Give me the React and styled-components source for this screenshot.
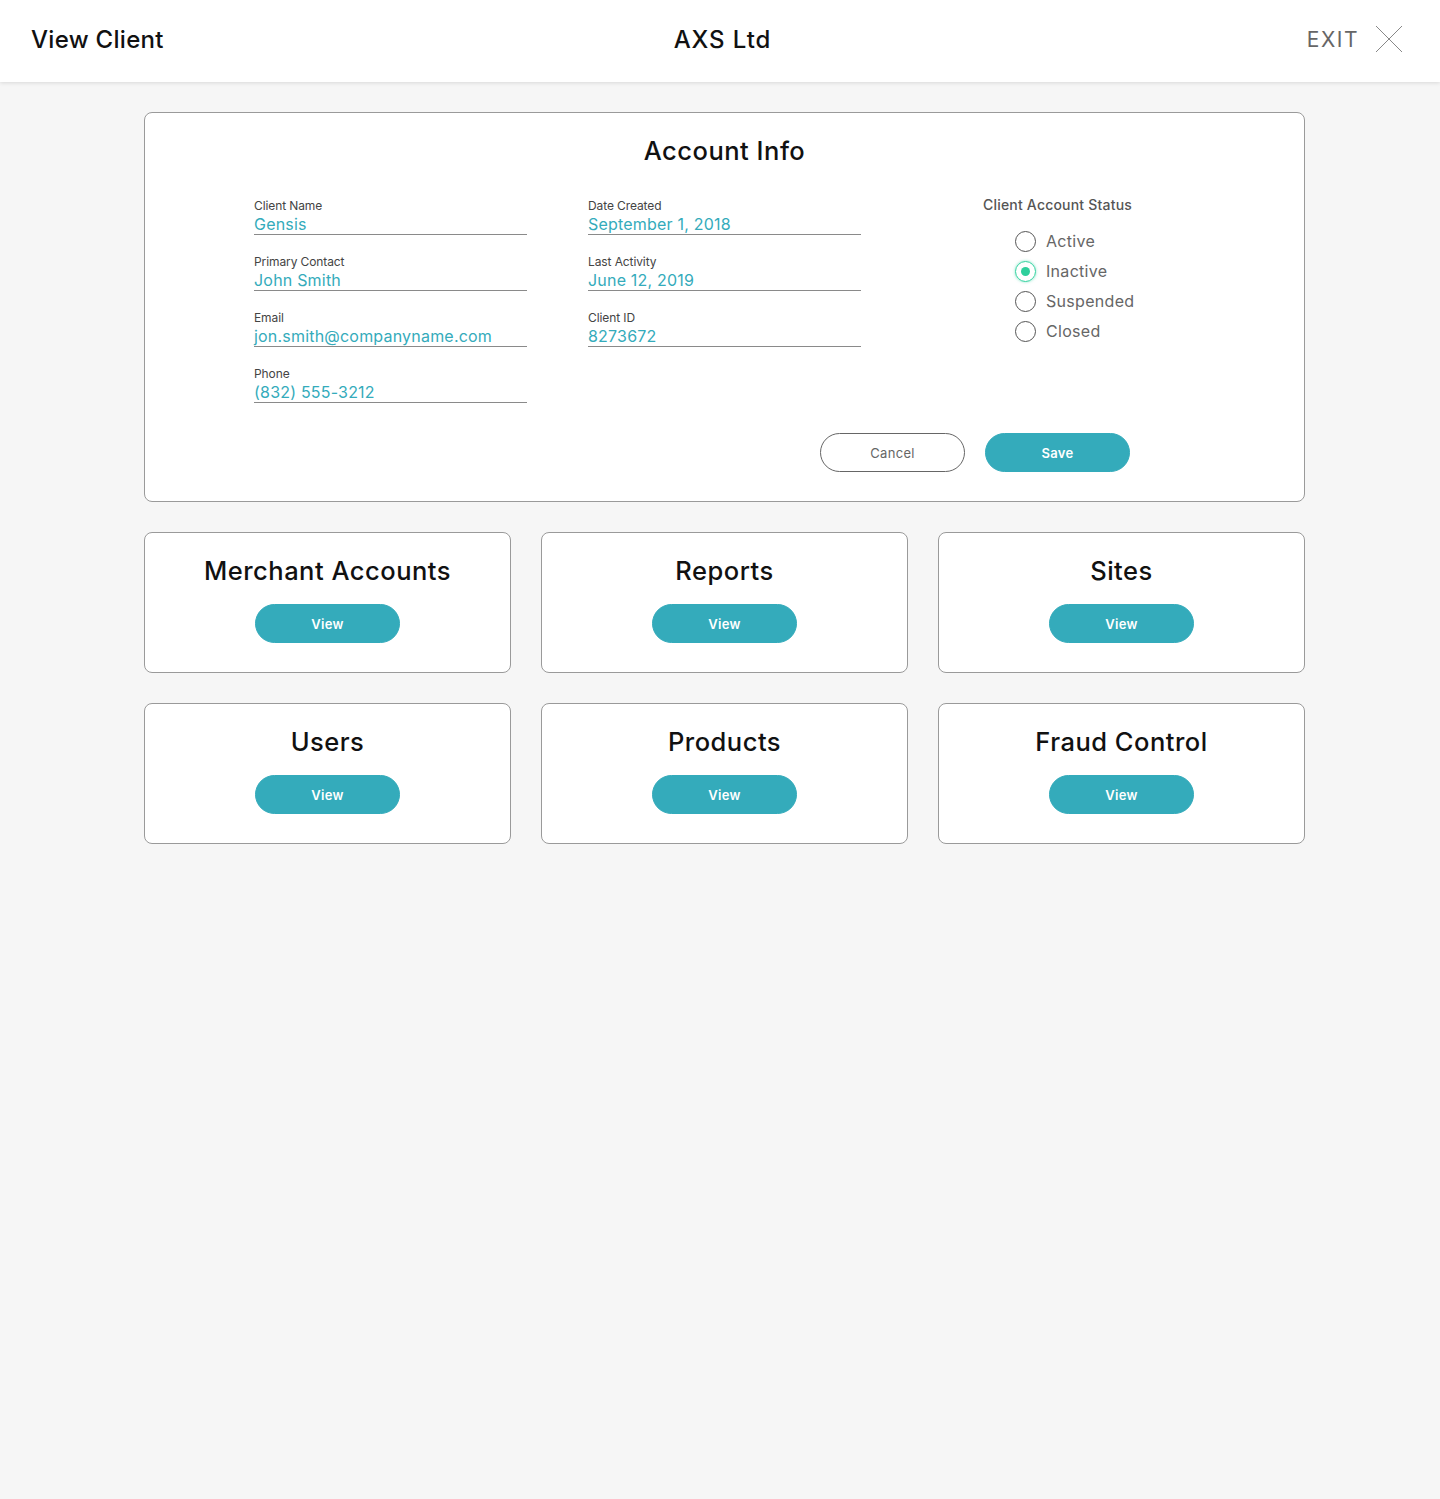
import React from 'react';
import styled, { createGlobalStyle } from 'styled-components';

const GlobalStyle = createGlobalStyle`
	body {
		margin: 0;
		background: #f6f6f6;
		font-family: Inter, Lato, "Noto Sans", sans-serif;
		color: #111;
	}
`;

const TEAL = '#34abbb';

const fieldsLeft = [
	{ label: 'Client Name', value: 'Gensis' },
	{ label: 'Primary Contact', value: 'John Smith' },
	{ label: 'Email', value: 'jon.smith@companyname.com' },
	{ label: 'Phone', value: '(832) 555-3212' },
];

const fieldsRight = [
	{ label: 'Date Created', value: 'September 1, 2018' },
	{ label: 'Last Activity', value: 'June 12, 2019' },
	{ label: 'Client ID', value: '8273672' },
];

const statuses = ['Active', 'Inactive', 'Suspended', 'Closed'];

const sections = [
	'Merchant Accounts',
	'Reports',
	'Sites',
	'Users',
	'Products',
	'Fraud Control',
];

export default function App() {
	const [status, setStatus] = React.useState('Inactive');
	return (
		<>
			<GlobalStyle />
			<Header>
				<PageTitle>View Client</PageTitle>
				<ClientTitle>AXS Ltd</ClientTitle>
				<ExitButton>
					EXIT
					<svg width="30" height="30" viewBox="0 0 30 30">
						<path d="M2 2 L28 28 M28 2 L2 28" stroke="#888" strokeWidth="1" fill="none" />
					</svg>
				</ExitButton>
			</Header>
			<Main>
				<InfoCard>
					<CardTitle>Account Info</CardTitle>
					<InfoBody>
						<FieldColumn>
							{fieldsLeft.map((f) => (
								<Field key={f.label}>
									<FieldLabel>{f.label}</FieldLabel>
									<FieldValue>{f.value}</FieldValue>
								</Field>
							))}
						</FieldColumn>
						<FieldColumn>
							{fieldsRight.map((f) => (
								<Field key={f.label}>
									<FieldLabel>{f.label}</FieldLabel>
									<FieldValue>{f.value}</FieldValue>
								</Field>
							))}
						</FieldColumn>
						<StatusColumn>
							<StatusTitle>Client Account Status</StatusTitle>
							<RadioList>
								{statuses.map((s) => (
									<RadioRow key={s} onClick={() => setStatus(s)}>
										<Radio checked={status === s} />
										{s}
									</RadioRow>
								))}
							</RadioList>
						</StatusColumn>
					</InfoBody>
					<Actions>
						<Button variant="outline">Cancel</Button>
						<Button>Save</Button>
					</Actions>
				</InfoCard>
				<SectionGrid>
					{sections.map((s) => (
						<SectionCard key={s}>
							<CardTitle>{s}</CardTitle>
							<Button>View</Button>
						</SectionCard>
					))}
				</SectionGrid>
			</Main>
		</>
	);
}

const Header = styled.header`
	display: grid;
	grid-template-columns: 1fr auto 1fr;
	align-items: center;
	box-sizing: border-box;
	height: 82px;
	padding: 0 36px 4px 31px;
	background: #fff;
	box-shadow: 0 1px 4px rgba(0, 0, 0, 0.12);
`;

const PageTitle = styled.h1`
	margin: 0;
	font-size: 24px;
	font-weight: 500;
	letter-spacing: 0.3px;
	color: #111;
`;

const ClientTitle = styled.h2`
	margin: 0;
	font-size: 24px;
	font-weight: 500;
	letter-spacing: 0.9px;
	color: #111;
	transform: translateX(5px);
`;

const ExitButton = styled.div`
	justify-self: end;
	display: flex;
	align-items: center;
	gap: 15px;
	font-size: 21px;
	letter-spacing: 1.5px;
	color: #666;
`;

const Main = styled.main`
	width: 1161px;
	margin: 30px 0 0 144px;
	padding-bottom: 40px;
`;

const InfoCard = styled.section`
	box-sizing: border-box;
	height: 390px;
	padding-top: 22px;
	background: #fff;
	border: 1px solid #9a9a9a;
	border-radius: 8px;
`;

const CardTitle = styled.h3`
	margin: 0;
	text-align: center;
	font-size: 25.5px;
	line-height: 32px;
	font-weight: 500;
	letter-spacing: 0.5px;
	color: #111;
`;

const InfoBody = styled.div`
	display: grid;
	grid-template-columns: 273px 273px auto;
	column-gap: 61px;
	padding: 32px 0 0 109px;
`;

const FieldColumn = styled.div`
	display: flex;
	flex-direction: column;
	gap: 20px;
`;

const Field = styled.div`
	display: flex;
	flex-direction: column;
	gap: 2px;
	border-bottom: 1px solid #8a8a8a;
	height: 36px;
	box-sizing: border-box;
`;

const FieldLabel = styled.span`
	font-size: 12px;
	color: #444;
	line-height: 14px;
	letter-spacing: -0.1px;
`;

const FieldValue = styled.span`
	font-size: 16px;
	color: ${TEAL};
	line-height: 19px;
	letter-spacing: 0.2px;
`;

const StatusColumn = styled.div`
	padding-left: 61px;
	margin-top: -3px;
`;

const StatusTitle = styled.div`
	font-size: 14px;
	font-weight: 500;
	color: #555;
	letter-spacing: 0.2px;
	line-height: 18px;
`;

const RadioList = styled.div`
	display: flex;
	flex-direction: column;
	gap: 8px;
	padding: 16px 0 0 32px;
`;

const RadioRow = styled.label`
	display: flex;
	align-items: center;
	gap: 10px;
	height: 22px;
	font-size: 16px;
	color: #666;
	letter-spacing: 0.3px;
	cursor: pointer;
`;

const Radio = styled.span`
	box-sizing: border-box;
	width: 21px;
	height: 21px;
	border-radius: 50%;
	border: 1.5px solid ${(props) => (props.checked ? '#2fd19e' : '#555')};
	box-shadow: ${(props) => (props.checked ? '0 0 3px rgba(47, 209, 158, 0.6)' : 'none')};
	display: flex;
	align-items: center;
	justify-content: center;

	&::after {
		content: '';
		display: ${(props) => (props.checked ? 'block' : 'none')};
		width: 9px;
		height: 9px;
		border-radius: 50%;
		background: #2fcf9c;
	}
`;

const Actions = styled.div`
	display: flex;
	gap: 20px;
	padding: 30px 0 0 675px;
`;

const Button = styled.button`
	box-sizing: border-box;
	width: 145px;
	height: 39px;
	border-radius: 20px;
	font-family: inherit;
	font-size: 13px;
	letter-spacing: 0.3px;
	cursor: pointer;
	border: 1px solid ${(props) => (props.variant === 'outline' ? '#666' : TEAL)};
	background: ${(props) => (props.variant === 'outline' ? '#fff' : TEAL)};
	color: ${(props) => (props.variant === 'outline' ? '#666' : '#fff')};
	font-weight: ${(props) => (props.variant === 'outline' ? 400 : 600)};
`;

const SectionGrid = styled.div`
	display: grid;
	grid-template-columns: repeat(3, 1fr);
	gap: 30px;
	margin-top: 30px;
`;

const SectionCard = styled.div`
	box-sizing: border-box;
	height: 141px;
	display: flex;
	flex-direction: column;
	align-items: center;
	gap: 17px;
	padding-top: 22px;
	background: #fff;
	border: 1px solid #9a9a9a;
	border-radius: 8px;
`;
